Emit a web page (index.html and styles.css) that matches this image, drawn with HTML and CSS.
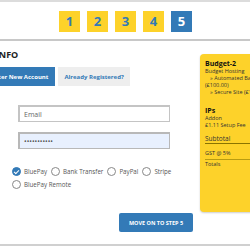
FILE: index.html
```html
<!DOCTYPE html>
<html lang="en">
<head>
  <meta charset="UTF-8" />
  <meta name="viewport" content="width=device-width, initial-scale=1.0" />
  <title>Checkout - Step 4</title>
  <link rel="stylesheet" href="styles.css">
</head>
<body>
  <div class="steps">
    <div class="step">1</div>
    <div class="step">2</div>
    <div class="step">3</div>
    <div class="step">4</div>
    <div class="step current">5</div>
  </div>

  <div class="content">
    <div class="main">
      <h2 class="section-title">Your Info</h2>

      <div class="tabs">
        <button class="tab active">Enter New Account</button>
        <button class="tab">Already Registered?</button>
      </div>

      <div class="fields">
        <input class="field" type="text" placeholder="Email">
        <input class="field autofill" type="password" value="password123">
      </div>

      <div class="gateways">
        <label class="gateway"><span class="radio checked"></span>BluePay</label>
        <label class="gateway"><span class="radio"></span>Bank Transfer</label>
        <label class="gateway"><span class="radio"></span>PayPal</label>
        <label class="gateway"><span class="radio"></span>Stripe</label>
        <label class="gateway"><span class="radio"></span>BluePay Remote</label>
      </div>

      <div class="actions">
        <button class="next">Move on to step 5</button>
      </div>
    </div>

    <aside class="summary">
      <div class="item-name">Budget-2</div>
      <div class="line">Budget Hosting</div>
      <div class="line sub">» Automated Backups</div>
      <div class="line">(£100.00)</div>
      <div class="line sub">» Secure Site (£10.00)</div>
      <div class="item-name spaced">IPs</div>
      <div class="line">Addon</div>
      <div class="line">£1.11 Setup Fee</div>
      <div class="subtotal">Subtotal</div>
      <div class="line tax">GST @ 5%</div>
      <div class="totals">Totals</div>
    </aside>
  </div>

  <div class="footer-line"></div>
</body>
</html>
```

FILE: styles.css
```css
body {
  margin: 0;
  width: 250px;
  height: 250px;
  overflow: hidden;
  font-family: 'Open Sans', sans-serif;
  background-color: #ffffff;
  color: #333;
}
.steps {
  border-top: 2px solid #dcdcdc;
  border-bottom: 2px solid #c8c8c8;
  height: 37px;
  display: flex;
  justify-content: center;
  align-items: flex-start;
  gap: 7px;
  padding-left: 1px;
}
.step {
  margin-top: 9px;
  width: 21px;
  height: 21px;
  background-color: #fdd22a;
  color: #337ab7;
  font-weight: 700;
  font-size: 13px;
  line-height: 21px;
  text-align: center;
}
.step.current {
  background-color: #337ab7;
  color: #fff;
}
.content {
  display: flex;
  align-items: flex-start;
}
.main {
  flex: 0 0 218px;
  margin-left: -18px;
}
.section-title {
  margin: 9px 0 0 -14px;
  font-size: 9px;
  font-weight: 700;
  text-transform: uppercase;
  line-height: 9px;
  color: #222;
}
.tabs {
  display: flex;
  gap: 3px;
  margin-top: 8px;
}
.tab {
  height: 19px;
  padding: 0 6px;
  border: none;
  font-family: 'Open Sans', sans-serif;
  font-size: 6px;
  font-weight: 700;
  background-color: #eeeeee;
  color: #337ab7;
}
.tab.active {
  background-color: #337ab7;
  color: #fff;
  padding: 0 7px 0 9px;
}
.fields {
  display: flex;
  flex-direction: column;
  gap: 10px;
  margin: 19px 0 0 36px;
  width: 152px;
}
.field {
  box-sizing: border-box;
  height: 17px;
  border: 2px solid #c4c4c4;
  border-right-width: 1px;
  border-bottom-width: 1px;
  padding: 0 4px;
  font-family: 'Open Sans', sans-serif;
  font-size: 7px;
  color: #555;
}
.field::placeholder {
  color: #666;
}
.field.autofill {
  background-color: #e8f0fe;
  border-color: #b8b8b8;
}
.gateways {
  display: flex;
  flex-wrap: wrap;
  column-gap: 4px;
  row-gap: 4px;
  margin: 18px 0 0 30px;
  width: 170px;
}
.gateway {
  display: flex;
  align-items: center;
  gap: 3px;
  font-size: 6.2px;
  color: #555;
  height: 9px;
}
.radio {
  box-sizing: border-box;
  width: 9px;
  height: 9px;
  border: 1px solid #888;
  border-radius: 50%;
  position: relative;
}
.radio.checked {
  background-color: #337ab7;
  border-color: #337ab7;
}
.radio.checked::after {
  content: '';
  position: absolute;
  left: 2px;
  top: 1px;
  width: 2px;
  height: 4px;
  border: solid #fff;
  border-width: 0 1px 1px 0;
  transform: rotate(45deg);
}
.actions {
  display: flex;
  justify-content: flex-end;
  margin: 24px 7px 0 0;
}
.next {
  width: 74px;
  height: 19px;
  border: none;
  border-radius: 2px;
  background-color: #337ab7;
  color: #fff;
  font-family: 'Open Sans', sans-serif;
  font-size: 5.5px;
  font-weight: 700;
  text-transform: uppercase;
}
.summary {
  flex: 0 0 70px;
  margin-top: 13px;
  height: 158px;
  box-sizing: border-box;
  padding: 5px 5px;
  background-color: #fdd22a;
  border-radius: 4px;
  box-shadow: 0 1px 2px rgba(0, 0, 0, 0.2);
  font-size: 5.5px;
  line-height: 7px;
  color: #333;
  white-space: nowrap;
  overflow: hidden;
}
.item-name {
  font-size: 7px;
  font-weight: 700;
  line-height: 9px;
  color: #111;
}
.item-name.spaced {
  margin-top: 10px;
}
.line.sub {
  padding-left: 5px;
}
.subtotal {
  margin-top: 5px;
  font-size: 6.5px;
  line-height: 9px;
  border-bottom: 1px solid #8a7400;
}
.tax {
  margin-top: 6px;
  padding-bottom: 2px;
  border-bottom: 1px solid #b89c10;
}
.totals {
  font-size: 5.5px;
  line-height: 9px;
}
.footer-line {
  margin-top: 12px;
  border-top: 2px solid #d0d0d0;
}
```
